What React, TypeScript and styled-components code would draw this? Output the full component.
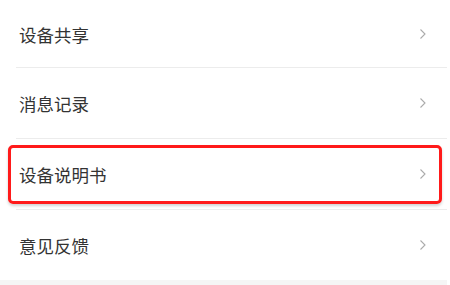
import React from "react";
import styled, { createGlobalStyle } from "styled-components";

const Global = createGlobalStyle`
  html, body { margin: 0; padding: 0; background: #ffffff; }
  body { font-family: "Noto Sans CJK SC", "Noto Sans", sans-serif; }
`;

const List = styled.div`
  width: 447px;
  display: flex;
  flex-direction: column;
  background: #ffffff;
`;

const Row = styled.div<{ $first?: boolean }>`
  position: relative;
  height: ${(p) => (p.$first ? 67 : 70)}px;
  display: flex;
  align-items: center;
  padding: 0 20px 0 19px;
  justify-content: space-between;
  box-sizing: border-box;
`;

const Label = styled.span`
  font-size: 17.5px;
  color: #333333;
  line-height: 18px;
  padding-top: 2px;
`;

const Divider = styled.div`
  height: 1px;
  margin-left: 16px;
  background: #ececec;
`;

const Highlight = styled.div`
  position: absolute;
  left: 8px;
  right: 5px;
  top: 6px;
  bottom: 5px;
  border: 3px solid #ff1a1a;
  border-radius: 5px;
  box-shadow: 0 2px 3px rgba(0, 0, 0, 0.18);
  pointer-events: none;
`;

const Footer = styled.div`
  height: 10px;
  background: #f5f5f5;
`;

const ChevronIcon = styled.svg`
  display: block;
`;

const Chevron = () => (
  <ChevronIcon width="8" height="12" viewBox="0 0 8 12" fill="none">
    <path d="M1.5 1.5 L6 6 L1.5 10.5" stroke="#ababab" strokeWidth="1.1" />
  </ChevronIcon>
);

const items = ["设备共享", "消息记录", "设备说明书", "意见反馈"];

export default function App() {
  return (
    <>
      <Global />
      <List>
        {items.map((t, i) => (
          <React.Fragment key={t}>
            <Row $first={i === 0}>
              <Label>{t}</Label>
              <Chevron />
              {i === 2 && <Highlight />}
            </Row>
            {i < items.length - 1 && <Divider />}
          </React.Fragment>
        ))}
        <Footer />
      </List>
    </>
  );
}
